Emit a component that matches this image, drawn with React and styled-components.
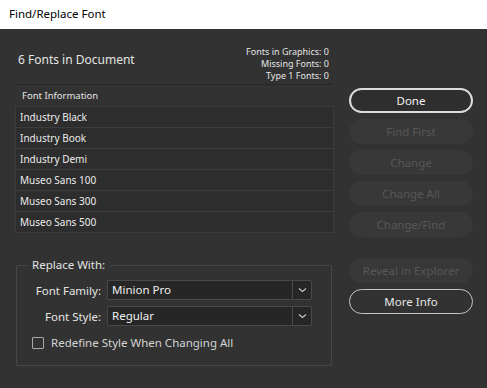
import React from 'react'
import styled, { createGlobalStyle } from 'styled-components'

const Global = createGlobalStyle`
  html, body {
    margin: 0;
    padding: 0;
    background: #323232;
  }
  body {
    font-family: "Noto Sans", "Open Sans", sans-serif;
  }
`

const fonts = [
  'Industry Black',
  'Industry Book',
  'Industry Demi',
  'Museo Sans 100',
  'Museo Sans 300',
  'Museo Sans 500',
]

const stats = [
  ['Fonts in Graphics', 0],
  ['Missing Fonts', 0],
  ['Type 1 Fonts', 0],
]

const buttons = [
  { label: 'Done', kind: 'primary' },
  { label: 'Find First', kind: 'disabled' },
  { label: 'Change', kind: 'disabled' },
  { label: 'Change All', kind: 'disabled' },
  { label: 'Change/Find', kind: 'disabled' },
]

const App = () => {
  return (
    <>
      <Global />
      <Window>
        <TitleBar>Find/Replace Font</TitleBar>
        <Body>
          <Left>
            <Summary>
              <Count>6 Fonts in Document</Count>
              <Stats>
                {stats.map(([label, value]) => (
                  <div key={label}>{label}: {value}</div>
                ))}
              </Stats>
            </Summary>
            <TableHead>Font Information</TableHead>
            <Table>
              {fonts.map(f => <Row key={f}>{f}</Row>)}
            </Table>
            <Group>
              <Legend>Replace With:</Legend>
              <Field>
                <Label>Font Family:</Label>
                <Select value="Minion Pro" />
              </Field>
              <Field>
                <Label>Font Style:</Label>
                <Select value="Regular" />
              </Field>
              <Check>
                <Box />
                <span>Redefine Style When Changing All</span>
              </Check>
            </Group>
          </Left>
          <Right>
            <ButtonStack>
              {buttons.map(b => <Button key={b.label} $kind={b.kind}>{b.label}</Button>)}
            </ButtonStack>
            <ButtonStack $top={21}>
              <Button $kind="disabled">Reveal in Explorer</Button>
              <Button $kind="outline">More Info</Button>
            </ButtonStack>
          </Right>
        </Body>
      </Window>
    </>
  )
}

const Select = ({ value }) => (
  <SelectBox>
    <SelectValue>{value}</SelectValue>
    <SelectArrow>
      <svg width="9" height="6" viewBox="0 0 9 6">
        <path d="M1 1.5 L4.5 4.5 L8 1.5" fill="none" stroke="#c8c8c8" strokeWidth="1.1" />
      </svg>
    </SelectArrow>
  </SelectBox>
)

const Window = styled.div`
  width: 487px;
  height: 388px;
  background: #323232;
  overflow: hidden;
`

const TitleBar = styled.div`
  height: 29px;
  background: #ffffff;
  color: #000;
  font-size: 11.5px;
  line-height: 28px;
  padding-left: 9px;
`

const Body = styled.div`
  display: flex;
  padding-left: 15px;
  gap: 15px;
`

const Left = styled.div`
  width: 319px;
  display: flex;
  flex-direction: column;
`

const Summary = styled.div`
  height: 56px;
  margin: 0 1px;
  box-sizing: border-box;
  border-bottom: 1px solid #262626;
  display: flex;
  align-items: flex-start;
  justify-content: space-between;
  padding: 0 4px 0 2px;
`

const Count = styled.div`
  color: #e4e4e4;
  font-size: 12px;
  line-height: 18px;
  margin-top: 22px;
`

const Stats = styled.div`
  color: #e4e4e4;
  font-size: 9px;
  line-height: 11.8px;
  text-align: right;
  margin-top: 17px;
`

const TableHead = styled.div`
  height: 21px;
  line-height: 22px;
  color: #e4e4e4;
  font-size: 9.5px;
  padding-left: 7px;
`

const Table = styled.div`
  border: 1px solid #3c3c3c;
  background: #2d2d2d;
`

const Row = styled.div`
  height: 20px;
  line-height: 20px;
  color: #ececec;
  font-size: 10px;
  padding-left: 4px;
  border-bottom: 1px solid #3c3c3c;
  &:last-child {
    border-bottom: none;
  }
`

const Group = styled.div`
  position: relative;
  margin: 32px 0 0 1px;
  width: 316px;
  height: 101px;
  box-sizing: border-box;
  border: 1px solid #474747;
  border-radius: 2px;
  padding: 14px 0 0 0;
  display: flex;
  flex-direction: column;
  gap: 6px;
`

const Legend = styled.div`
  position: absolute;
  top: -9px;
  left: 10px;
  padding: 0 5px;
  background: #323232;
  color: #e4e4e4;
  font-size: 11.5px;
  line-height: 16px;
`

const Field = styled.div`
  display: grid;
  grid-template-columns: 84px 205px;
  gap: 6px;
  align-items: center;
`

const Label = styled.div`
  text-align: right;
  color: #e4e4e4;
  font-size: 11.5px;
`

const SelectBox = styled.div`
  height: 20px;
  box-sizing: border-box;
  border: 1px solid #4a4a4a;
  border-radius: 2px;
  background: #262626;
  display: flex;
`

const SelectValue = styled.div`
  flex: 1;
  color: #eeeeee;
  font-size: 11.5px;
  line-height: 18px;
  padding-left: 4px;
`

const SelectArrow = styled.div`
  width: 18px;
  border-left: 1px solid #4a4a4a;
  display: flex;
  align-items: center;
  justify-content: center;
`

const Check = styled.label`
  display: flex;
  align-items: center;
  gap: 7px;
  margin: 3px 0 0 15px;
  color: #d4d4d4;
  font-size: 11.5px;
`

const Box = styled.span`
  width: 12px;
  height: 12px;
  box-sizing: border-box;
  border: 1px solid #a8a8a8;
  border-radius: 1px;
`

const Right = styled.div`
  width: 124px;
  padding-top: 59px;
  display: flex;
  flex-direction: column;
`

const ButtonStack = styled.div`
  display: flex;
  flex-direction: column;
  gap: 6px;
  margin-top: ${p => p.$top || 0}px;
`

const Button = styled.div`
  height: 25px;
  box-sizing: border-box;
  border-radius: 13px;
  display: flex;
  align-items: center;
  justify-content: center;
  font-size: 11.5px;
  ${p => p.$kind === 'primary' && `
    border: 2px solid #dcdcdc;
    color: #f2f2f2;
    background: #2e2e2e;
  `}
  ${p => p.$kind === 'outline' && `
    border: 1px solid #c4c4c4;
    color: #e6e6e6;
  `}
  ${p => p.$kind === 'disabled' && `
    background: #383838;
    color: #575757;
  `}
`

export default App
